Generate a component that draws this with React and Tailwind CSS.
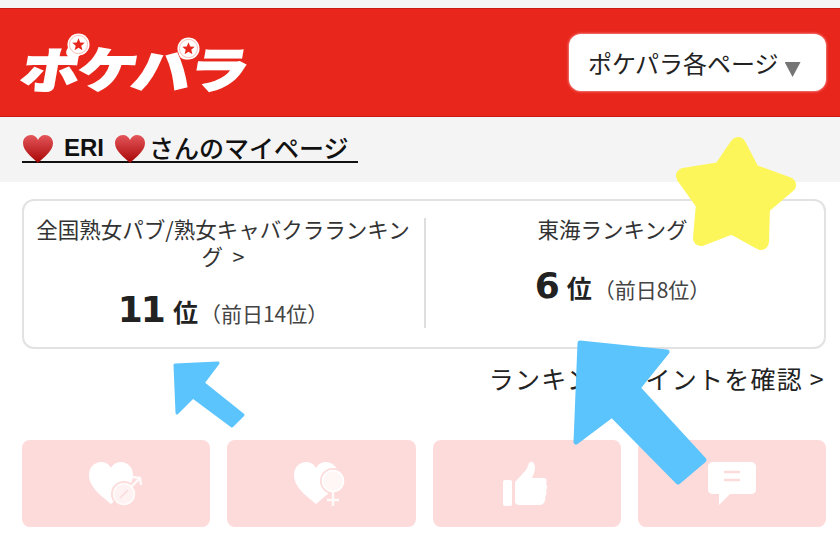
const font = { fontFamily: '"Noto Sans CJK JP", "Noto Sans", sans-serif' };

function Heart({ id, className }) {
  return (
    <svg viewBox="0 0 32 30" className={className}>
      <defs>
        <linearGradient id={id} x1="0" y1="0" x2="0" y2="1">
          <stop offset="0" stopColor="#e4565a" />
          <stop offset="1" stopColor="#a80505" />
        </linearGradient>
      </defs>
      <path
        d="M16 29 C10 23 1 17 1 9 C1 4 5 1 9 1 C12 1 15 3 16 6 C17 3 20 1 23 1 C27 1 31 4 31 9 C31 17 22 23 16 29 Z"
        fill={`url(#${id})`}
      />
    </svg>
  );
}

function StarBadge({ className }) {
  return (
    <svg viewBox="0 0 24 24" className={className}>
      <circle cx="12" cy="12" r="11.5" fill="#fff" />
      <circle cx="12" cy="12" r="9.5" fill="none" stroke="#f4a9a4" strokeWidth="0.8" />
      <path d="M12 5.5 L13.8 10 L18.5 10.3 L14.9 13.3 L16.1 18 L12 15.4 L7.9 18 L9.1 13.3 L5.5 10.3 L10.2 10 Z" fill="#e9261c" />
    </svg>
  );
}

const heartPath = "M24 44 C16 37 2 28 2 15 C2 7 8 2 14 2 C18 2 22 4 24 8 C26 4 30 2 34 2 C40 2 46 7 46 15 C46 28 32 37 24 44 Z";

function HeartMale() {
  return (
    <svg viewBox="0 0 56 48" className="w-[56px] h-[48px] mr-[3px]">
      <path d={heartPath} fill="#fff" />
      <circle cx="37" cy="34" r="13" fill="#fddbdb" />
      <circle cx="37" cy="34" r="10.5" fill="#fff" fillOpacity="0.65" stroke="#fff" strokeOpacity="0.8" strokeWidth="1.6" />
      <path d="M33 38 L41 30" stroke="#fddbdb" strokeWidth="1.6" />
      <path d="M44 27 L53 18 M46 17 L53 18 L54 25" stroke="#fff" strokeOpacity="0.85" strokeWidth="2.4" fill="none" />
    </svg>
  );
}

function HeartFemale() {
  return (
    <svg viewBox="0 0 56 48" className="w-[56px] h-[48px] mr-[3px]">
      <path d={heartPath} fill="#fff" />
      <circle cx="41" cy="21" r="13" fill="#fddbdb" />
      <circle cx="41" cy="21" r="10.5" fill="#fff" fillOpacity="0.75" stroke="#fff" strokeWidth="1.6" />
      <path d="M41 32 L41 46 M35 40 L47 40" stroke="#fff" strokeOpacity="0.85" strokeWidth="2.4" />
    </svg>
  );
}

function ThumbIcon() {
  return (
    <svg viewBox="0 0 46 46" className="w-[46px] h-[46px] mr-[4px]">
      <rect x="1" y="19" width="9" height="26" rx="2" fill="#fff" />
      <path
        d="M13 21 L24 9 C26 6 26 3 28 1 C31 0 33 3 33 7 C33 11 31 14 30 17 L42 17 C45 17 45 21 44 23 C46 25 45 28 44 30 C45 32 44 35 43 36 C44 39 42 44 38 44 L17 44 C15 44 13 42 13 41 Z"
        fill="#fff"
      />
    </svg>
  );
}

function ChatIcon() {
  return (
    <svg viewBox="0 0 48 44" className="w-[48px] h-[44px]">
      <path
        d="M5 0 L43 0 C46 0 48 2 48 5 L48 27 C48 30 46 32 43 32 L22 32 L11 43 L11 32 L5 32 C2 32 0 30 0 27 L0 5 C0 2 2 0 5 0 Z"
        fill="#fff"
      />
      <path d="M16 10 L32 10 M16 18 L32 18" stroke="#fddbdb" strokeWidth="2.4" />
    </svg>
  );
}

function RankCell({ title, rank, prev, titleClass, rowClass }) {
  return (
    <div className="flex-1 flex flex-col items-center">
      <div className={`text-center text-[21.5px] leading-[27px] text-[#333] ${titleClass}`}>{title}</div>
      <div className={`flex items-baseline text-[#222] ${rowClass}`}>
        <span className="font-bold text-[36px] leading-[44px] tracking-[-2px]" style={{ fontFamily: '"DejaVu Sans", sans-serif' }}>{rank}</span>
        <span className="font-bold text-[25px] leading-[44px] ml-[9px]">位</span>
        <span className="text-[21px] leading-[44px] text-[#444] ml-[2px]">（前日{prev}位）</span>
      </div>
    </div>
  );
}

export default function App() {
  return (
    <div className="relative w-[840px] h-[537px] overflow-hidden bg-white" style={font}>
      <div className="h-2 bg-[#f4f4f4]" />

      {/* Header */}
      <header className="h-[109px] bg-[#e9261c] border-y border-[#c91a12] flex items-center justify-between pl-[22px] pr-[14px]">
        <div className="relative w-[226px] h-[60px] mt-[8px]">
          <div className="text-white font-black text-[59px] leading-[60px] tracking-[-2px] whitespace-nowrap [transform:skewX(-10deg)_scaleY(0.82)] [-webkit-text-stroke:2px_white]">ポケパラ</div>
          <StarBadge className="absolute left-[45px] -top-[4px] w-[23px] h-[23px]" />
          <StarBadge className="absolute left-[155px] top-[0px] w-[23px] h-[23px]" />
        </div>
        <button className="w-[257px] h-[57px] bg-white rounded-xl flex items-center pl-[19px] text-[24px] text-[#222] shadow-[0_0_3px_#ffd0d0]">
          <span>ポケパラ各ページ</span>
          <span className="w-[16px] h-[15px] ml-[6px] mt-[14px] bg-[#757575] [clip-path:polygon(0_0,100%_0,50%_100%)]" />
        </button>
      </header>

      {/* Title */}
      <div className="h-[65px] bg-[#f4f4f4] pl-[22px] pt-[14px]">
        <div className="inline-flex items-center h-[32px] border-b-2 border-[#111] text-[24px] font-bold text-[#111] w-[336px]">
          <Heart id="h1" className="w-[32px] h-[30px] mt-[6px]" />
          <span className="ml-[10px] mt-[3px] font-bold" style={{ fontFamily: '"Liberation Sans", sans-serif' }}>ERI</span>
          <Heart id="h2" className="w-[32px] h-[30px] ml-[10px] mt-[6px]" />
          <span className="ml-[3px] mt-[3px] font-medium text-[25px] whitespace-nowrap">さんのマイページ</span>
        </div>
      </div>

      {/* Ranking card */}
      <div className="ml-[22px] mt-[17px] w-[804px] h-[150px] border-2 border-[#e2e2e2] rounded-xl flex items-start pt-[14px]">
        <div className="w-[400px] pl-[12px] pr-[14px]">
          <RankCell title={<>全国熟女パブ/熟女キャバクラランキング &nbsp;&gt;</>} rank="11" prev="14" titleClass="mb-[19px]" rowClass="" />
        </div>
        <div className="w-[2px] h-[110px] mt-[3px] bg-[#dedede]" />
        <div className="flex-1 pr-[25px]">
          <RankCell title="東海ランキング" rank="6" prev="8" titleClass="mb-[22px]" rowClass="pl-[20px]" />
        </div>
      </div>

      <div className="mt-[11px] w-[825px] text-right text-[25px] leading-[36px] tracking-[1.25px] text-[#222]">ランキングポイントを確認 &gt;</div>

      {/* Icon buttons */}
      <div className="mt-[44px] ml-[22px] w-[804px] grid grid-cols-4 gap-[17px] h-[87px]">
        <div className="bg-[#fddbdb] rounded-lg flex items-center justify-center"><HeartMale /></div>
        <div className="bg-[#fddbdb] rounded-lg flex items-center justify-center"><HeartFemale /></div>
        <div className="bg-[#fddbdb] rounded-lg flex items-center justify-center"><ThumbIcon /></div>
        <div className="bg-[#fddbdb] rounded-lg flex items-center justify-center"><ChatIcon /></div>
      </div>

      {/* Hand-drawn marks on top of the screenshot */}
      <svg viewBox="0 0 840 537" className="absolute inset-0 w-[840px] h-[537px] pointer-events-none">
        <polygon
          points="738,145 752,172 788,185 762,207 761,242 732,226 701,238 704,204 684,176 721,170"
          fill="#fdf65a"
          stroke="#fdf65a"
          strokeWidth="16"
          strokeLinejoin="round"
        />
        <polygon
          points="175,365 218,363 203,383 243,415 232,426 193,397 177,413"
          fill="#5bc4fd"
          stroke="#5bc4fd"
          strokeWidth="3"
          strokeLinejoin="round"
        />
        <polygon
          points="580,343 667,352 638,388 704,460 678,482 612,415 576,442"
          fill="#5bc4fd"
          stroke="#5bc4fd"
          strokeWidth="5"
          strokeLinejoin="round"
        />
      </svg>
    </div>
  );
}
